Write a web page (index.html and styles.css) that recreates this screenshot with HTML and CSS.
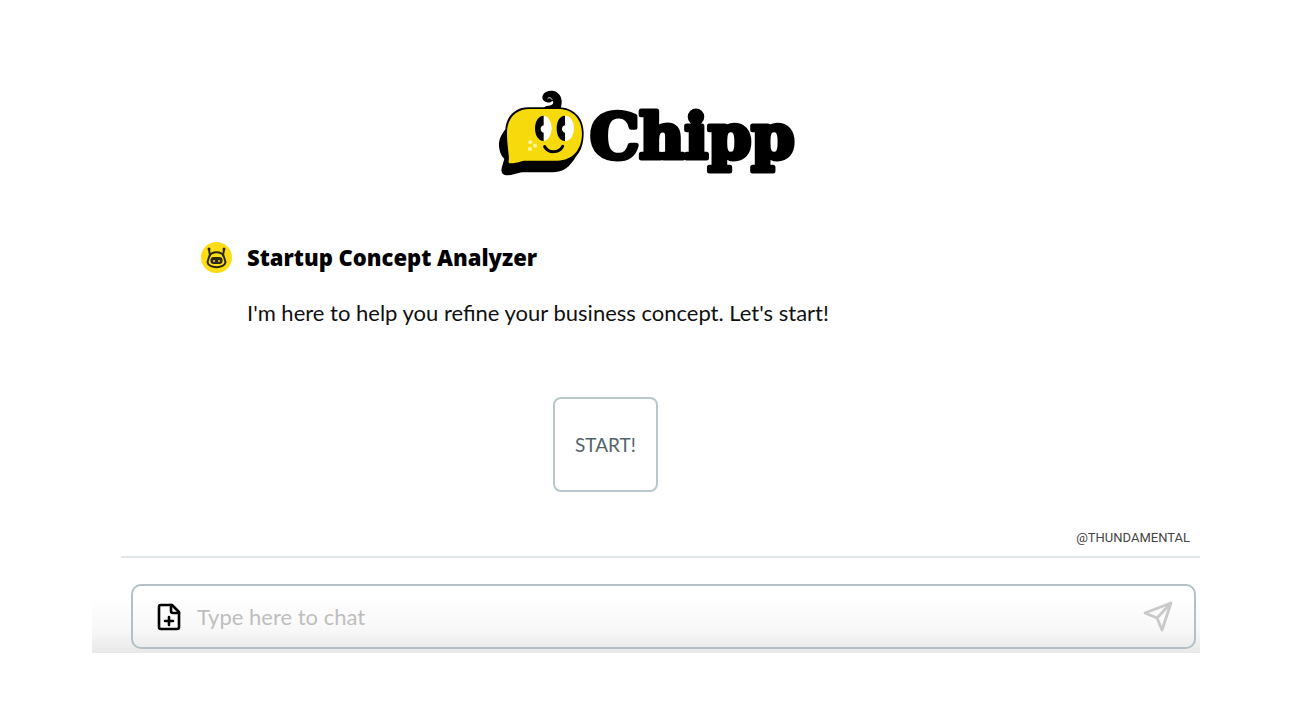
FILE: index.html
```html
<!DOCTYPE html>
<html lang="en">
<head>
    <meta charset="UTF-8">
    <meta name="viewport" content="width=device-width, initial-scale=1.0">
    <title>Chipp - Startup Concept Analyzer</title>
    <link rel="stylesheet" href="styles.css">
</head>
<body>
    <div class="page">
        <!-- Logo -->
        <header class="logo">
            <svg class="logo-mascot" viewBox="24 24 264 264" aria-hidden="true">
                <path d="M118 82 H207 C255 82 284 115 284 158 C284 190 276 212 262 228 C242 262 222 277 190 277 H108 C88 277 78 284 58 286 C42 287 35 278 38 264 L46 236 C34 226 29 206 30 188 C32 172 40 160 49 148 C52 108 80 82 118 82 Z" fill="#000"/>
                <path d="M122 87 H207 C252 87 279 118 279 160 C279 209 251 242 205 242 H108 C98 242 88 249 64 250 C60 250 58 247 59 243 C62 226 54 202 54 158 C54 116 80 87 122 87 Z" fill="#f6da0b"/>
                <path d="M164 86 C164 80 170 78 179 77 C192 76 196 67 190 62 C187 66 182 69 174 67 C160 64 157 52 163 43 C170 32 190 29 203 37 C219 47 221 66 215 86 Z" fill="#000"/>
                <path d="M176 56 C180 51 187 53 189 59" fill="none" stroke="#fff" stroke-width="3"/>
                <ellipse cx="163" cy="145" rx="25" ry="38" fill="#fff"/>
                <path d="M164 107 C148 107 138 124 138 145 C138 167 148 183 164 183 V158 C152 157 152 137 164 136 Z" fill="#000"/>
                <ellipse cx="230" cy="145" rx="25" ry="38" fill="#fff"/>
                <path d="M228 107 C212 107 203 124 203 145 C203 167 212 183 228 183 V158 C216 157 216 137 228 136 Z" fill="#000"/>
                <path d="M167 200 C178 220 210 220 221 199" fill="none" stroke="#000" stroke-width="9" stroke-linecap="round"/>
                <g fill="#fff7a0">
                    <circle cx="124" cy="187" r="6"/>
                    <circle cx="138" cy="197" r="6"/>
                    <circle cx="123" cy="207" r="6"/>
                </g>
            </svg>
            <svg class="logo-wordmark" viewBox="0 0 208 92" role="img" aria-label="Chipp">
                <text class="logo-text" x="2" y="70">Chipp</text>
            </svg>
        </header>

        <!-- Conversation -->
        <main class="chat">
            <div class="message">
                <svg class="avatar" viewBox="0 0 62 62" aria-hidden="true">
                    <circle cx="31" cy="31" r="31" fill="#fddd17"/>
                    <g fill="none" stroke="#2b2708" stroke-width="4" stroke-linecap="round">
                        <path d="M16 15 L18 27 M46 15 L44 27"/>
                        <path d="M16 30 C20 17 42 17 46 30 L49 40 C47 54 15 54 13 40 Z"/>
                    </g>
                    <circle cx="16" cy="14" r="3" fill="#2b2708"/>
                    <circle cx="46" cy="14" r="3" fill="#2b2708"/>
                    <rect x="19" y="30" width="24" height="14" rx="6" fill="#2b2708"/>
                    <circle cx="26" cy="38" r="2" fill="#fddd17"/>
                    <circle cx="36" cy="38" r="2" fill="#fddd17"/>
                </svg>
                <div class="message-body">
                    <h1>Startup Concept Analyzer</h1>
                    <p>I'm here to help you refine your business concept. Let's start!</p>
                </div>
            </div>
            <div class="choices">
                <button type="button" class="start-button">START!</button>
            </div>
            <a class="credit" href="#">@THUNDAMENTAL</a>
        </main>

        <!-- Chat box -->
        <form class="composer">
            <div class="composer-box">
                <button type="button" class="icon-button" aria-label="Add file">
                    <svg class="file-icon" viewBox="0 0 24 28" fill="none" stroke="#000" stroke-width="2.6" stroke-linecap="round" stroke-linejoin="round">
                        <path d="M15 2 H4 Q2 2 2 4 V24 Q2 26 4 26 H20 Q22 26 22 24 V9 Z"/>
                        <path d="M14 2 V8 Q14 10 16 10 H22"/>
                        <path d="M12 14 V22 M8 18 H16"/>
                    </svg>
                </button>
                <input type="text" class="composer-input" placeholder="Type here to chat" aria-label="Type here to chat">
                <button type="submit" class="icon-button" aria-label="Send">
                    <svg class="send-icon" viewBox="0 0 30 32" fill="none" stroke="#c9c9c9" stroke-width="2.8" stroke-linecap="round" stroke-linejoin="round">
                        <path d="M28 2 L2 12 L14 17 L19 29 Z M28 2 L14 17"/>
                    </svg>
                </button>
            </div>
        </form>
    </div>
</body>
</html>
```
FILE: styles.css
```css
* {
    box-sizing: border-box;
}

body {
    margin: 0;
    background-color: #fff;
    color: #111;
    font-family: Lato, "Open Sans", sans-serif;
}

.page {
    padding: 88px 92px 0;
}

.logo {
    display: flex;
    justify-content: center;
    height: 92px;
    gap: 3px;
}

.logo-mascot {
    width: 88px;
    height: 88px;
}

.logo-wordmark {
    width: 208px;
    height: 92px;
}

.logo-text {
    font-family: "DejaVu Serif", serif;
    font-weight: bold;
    font-size: 62px;
    fill: #000;
    stroke: #000;
    stroke-width: 5px;
    stroke-linejoin: round;
}

.chat {
    margin-left: 29px;
    padding: 62px 0 10px 80px;
    border-bottom: 2px solid #e1e6e9;
}

.message {
    display: flex;
    gap: 15px;
}

.avatar {
    width: 31px;
    height: 31px;
    flex-shrink: 0;
}

.message-body h1 {
    margin: 0;
    font-family: "Open Sans", sans-serif;
    font-size: 22px;
    line-height: 30px;
    font-weight: 800;
    color: #000;
}

.message-body p {
    margin: 26px 0 0;
    font-size: 22px;
    line-height: 30px;
}

.choices {
    display: flex;
    justify-content: center;
    margin-top: 69px;
    padding-right: 190px;
}

.start-button {
    padding: 34px 20px;
    border: 2px solid #bac8ce;
    border-radius: 8px;
    background-color: #fff;
    color: #53646c;
    font-family: inherit;
    font-size: 19px;
    line-height: 23px;
    cursor: pointer;
}

.credit {
    display: block;
    margin: 38px 10px 0 0;
    text-align: right;
    font-family: Roboto, sans-serif;
    font-size: 13px;
    line-height: 16px;
    color: #444;
    text-decoration: none;
}

.composer {
    padding: 26px 4px 4px 39px;
    background: linear-gradient(to bottom, #fff 40%, #f8f8f8 75%, #e8e8e8);
}

.composer-box {
    display: flex;
    align-items: center;
    height: 65px;
    padding: 0 21px 0 24px;
    border: 2px solid #b3c1c7;
    border-radius: 10px;
}

.icon-button {
    display: flex;
    padding: 0;
    border: none;
    background: none;
    cursor: pointer;
}

.file-icon {
    width: 24px;
    height: 28px;
}

.send-icon {
    width: 30px;
    height: 32px;
}

.composer-input {
    flex: 1;
    min-width: 0;
    padding: 0 16px;
    border: none;
    outline: none;
    background: none;
    font-family: inherit;
    font-size: 22px;
    line-height: 30px;
}

.composer-input::placeholder {
    color: #bebebe;
}
```
